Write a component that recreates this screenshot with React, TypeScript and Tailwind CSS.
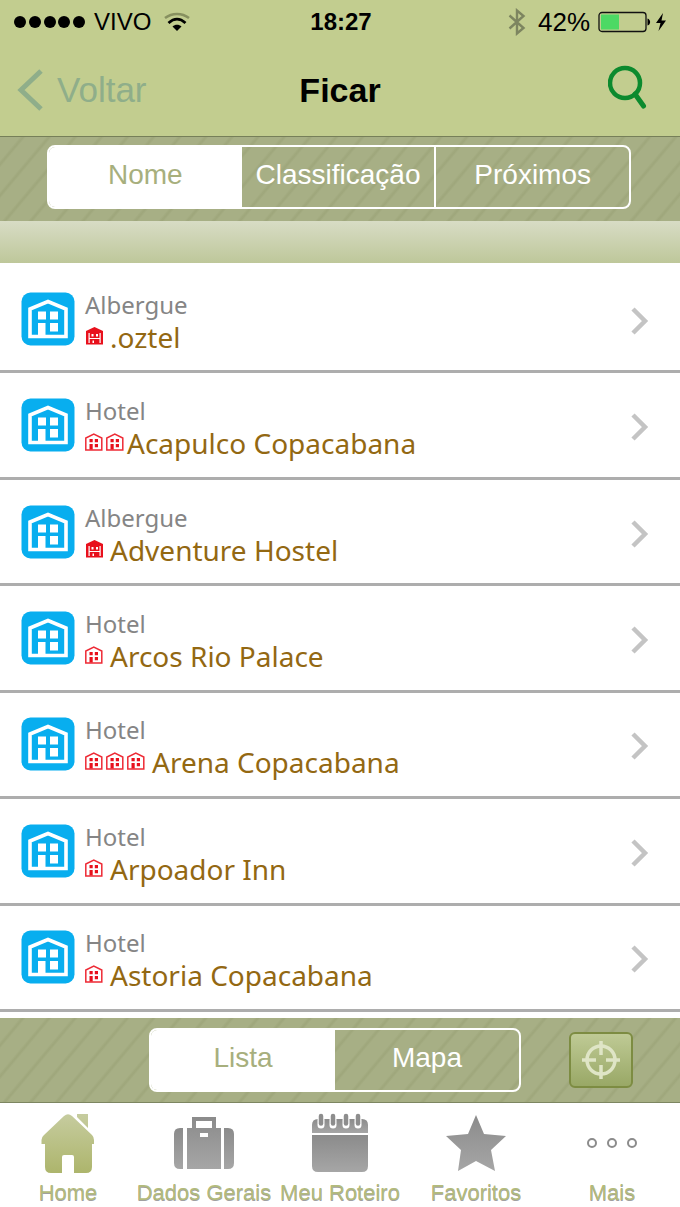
import type { ReactNode } from "react"

interface Place {
  kind: "Albergue" | "Hotel"
  name: string
  rating: number
}

const PLACES: Place[] = [
  { kind: "Albergue", name: ".oztel", rating: 1 },
  { kind: "Hotel", name: "Acapulco Copacabana", rating: 2 },
  { kind: "Albergue", name: "Adventure Hostel", rating: 1 },
  { kind: "Hotel", name: "Arcos Rio Palace", rating: 1 },
  { kind: "Hotel", name: "Arena Copacabana", rating: 3 },
  { kind: "Hotel", name: "Arpoador Inn", rating: 1 },
  { kind: "Hotel", name: "Astoria Copacabana", rating: 1 },
]

const STRIPES =
  "bg-[#a7af85] bg-[repeating-linear-gradient(130deg,transparent_0px,transparent_15px,#a0a87d_17px,#9fa77c_18px,transparent_20px)]"

function StatusBar() {
  return (
    <div className="flex h-11 items-center justify-between pl-3.5 pr-3 text-black">
      <div className="flex flex-1 items-center">
        <svg width="72" height="14" viewBox="0 0 72 14" aria-hidden="true">
          {[6, 21, 36, 50, 65].map((x) => (
            <circle key={x} cx={x} cy="7" r="6" />
          ))}
        </svg>
        <span className="ml-2 text-2xl leading-8">VIVO</span>
        <svg className="ml-3" width="28" height="20" viewBox="0 0 28 20" fill="none" aria-hidden="true">
          <path d="M2 6 C9 0.5 19 0.5 26 6" stroke="#87905f" strokeWidth="2.5" />
          <path d="M5.5 11 C11 6 17 6 22.5 11" stroke="#000" strokeWidth="2.8" />
          <path d="M9.5 14.5 C12 12 16 12 18.5 14.5 L14 19 Z" fill="#000" />
        </svg>
      </div>
      <span className="text-2xl font-bold leading-8">18:27</span>
      <div className="flex flex-1 items-center justify-end">
        <svg width="18" height="28" viewBox="0 0 18 28" fill="none" stroke="#7d8560" strokeWidth="2.4" aria-hidden="true">
          <path d="M1.5 7.5 L15.500 20 L9 25.500 V2.500 L15.500 8 L1.500 20.500" />
        </svg>
        <span className="ml-3 text-[26px] leading-8">42%</span>
        <svg className="ml-2" width="70" height="22" viewBox="0 0 70 22" aria-hidden="true">
          <rect x="1" y="1.5" width="47" height="19" rx="3" fill="none" stroke="#111" strokeWidth="1.3" />
          <rect x="3" y="3.5" width="18" height="15" fill="#4cd964" />
          <path d="M49.5 7.5 C53 8.5 53 13.5 49.5 14.5 Z" />
          <path d="M65 2 L58 12 H62.5 L60.5 20 L68 9.5 H63.5 Z" />
        </svg>
      </div>
    </div>
  )
}

function NavBar() {
  return (
    <header className="grid h-[92px] grid-cols-3 items-center pl-4 pr-8">
      <button className="flex items-center gap-3.5 text-[#8fae8a]">
        <svg width="27" height="42" viewBox="0 0 27 42" fill="none" stroke="currentColor" strokeWidth="5" aria-hidden="true">
          <path d="M25 2 L5 21 L25 40" />
        </svg>
        <span className="text-[35px] leading-10">Voltar</span>
      </button>
      <h1 className="ml-4 text-center text-[34px] font-bold leading-10 text-black">Ficar</h1>
      <button aria-label="Buscar" className="justify-self-end pb-1.5">
        <svg width="40" height="44" viewBox="0 0 40 44" fill="none" stroke="#0c8a2e" aria-hidden="true">
          <circle cx="17" cy="18" r="15" strokeWidth="4.5" />
          <path d="M27 29 L35.500 41" strokeWidth="5" strokeLinecap="round" />
        </svg>
      </button>
    </header>
  )
}

function Segments({ label, items, className }: { label: string; items: string[]; className: string }) {
  return (
    <div
      role="group"
      aria-label={label}
      className={`flex h-16 overflow-hidden rounded-lg border-2 border-white text-[28px] leading-8 ${className}`}
    >
      {items.map((item, i) => (
        <button
          key={item}
          aria-pressed={i === 0}
          className={
            i === 0
              ? "flex-1 basis-0 bg-white pb-1 text-[#a7af7d]"
              : `flex-1 basis-0 pb-1 text-white ${i > 1 ? "border-l-2 border-white" : ""}`
          }
        >
          {item}
        </button>
      ))}
    </div>
  )
}

function HouseBadge() {
  return (
    <svg className="shrink-0" width="54" height="54" viewBox="0 0 54 54" aria-hidden="true">
      <rect x="0.5" y="0.5" width="53" height="53" rx="9" fill="#08aeef" />
      <path d="M9 44.5 V17 L27 9.5 L45 17 V44.5 Z" fill="none" stroke="#fff" strokeWidth="3.6" />
      <path d="M17 19.5 h8 v8 h-8z M29 19.5 h8 v8 h-8z M29 31 h8 v8.500 h-8z M17 31 h7.500 v13 h-7.500z" fill="#fff" />
    </svg>
  )
}

function RatingHouse({ solid }: { solid: boolean }) {
  if (solid) {
    return (
      <svg width="19" height="18" viewBox="0 0 19 18" aria-hidden="true">
        <path d="M1 17.500 V4 L9.500 0 L18 4 V17.500 Z" fill="#e8101c" />
        <path
          d="M3.500 6 h1.200 v10 h-1.200z M14.500 6 h1.200 v10 h-1.200z M6.500 7 h2 v2.500 h-2z M11 7 h2 v2.500 h-2z M4 11 h11 v1 h-11z M7.500 13.500 h1.500 v2.500 h-1.500z"
          fill="#fff"
        />
      </svg>
    )
  }
  return (
    <svg width="19" height="18" viewBox="0 0 19 18" aria-hidden="true">
      <path d="M0.800 17 V5 L8.800 1 L16.800 5 V17 Z" fill="none" stroke="#ee2a35" strokeWidth="1.5" />
      <path d="M4.500 6 h3.200 v3.200 h-3.200z M9.800 6 h3.200 v3.200 h-3.200z M9.800 11 h3.200 v3.200 h-3.200z M4.500 11 h3.200 v5.500 h-3.200z" fill="#e8101c" />
    </svg>
  )
}

function PlaceRow({ place }: { place: Place }) {
  return (
    <li className="border-b-[3px] border-[#adadad]">
      <a href="#" className="flex h-full items-center pl-[21px] pr-[31px]">
        <HouseBadge />
        <span className="ml-2.5 min-w-0 flex-1 pt-1 font-['Noto_Sans',sans-serif]">
          <span className="block text-2xl leading-8 text-[#858585]">{place.kind}</span>
          <span className="flex items-center">
            <span className="flex gap-0.5 pb-0.5" role="img" aria-label={`Nota ${place.rating}`}>
              {Array.from({ length: place.rating }, (_, i) => (
                <RatingHouse key={i} solid={place.kind === "Albergue"} />
              ))}
            </span>
            <span className={`text-[28px] leading-8 text-[#936812] ${place.rating === 2 ? "ml-0.5" : "ml-1.5"}`}>
              {place.name}
            </span>
          </span>
        </span>
        <svg
          className="mt-1"
          width="18"
          height="28"
          viewBox="0 0 18 28"
          fill="none"
          stroke="#c4c4c4"
          strokeWidth="4.5"
          aria-hidden="true"
        >
          <path d="M2 2 L14 14 L2 26" />
        </svg>
      </a>
    </li>
  )
}

function TabItem({ label, active, children }: { label: string; active?: boolean; children: ReactNode }) {
  return (
    <a
      href="#"
      aria-current={active ? "page" : undefined}
      className="flex min-w-0 flex-1 flex-col items-center pt-2 text-[22px] leading-7 whitespace-nowrap text-[#b3bb7c] [text-shadow:0_1px_0_#a0a0a0]"
    >
      <svg width="64" height="64" viewBox="0 0 64 64" fill="url(#tab-gray)" aria-hidden="true">
        {children}
      </svg>
      <span className="mt-1">{label}</span>
    </a>
  )
}

function TabBar() {
  return (
    <nav className="flex h-[104px] bg-white">
      <svg width="0" height="0" className="absolute" aria-hidden="true">
        <defs>
          <linearGradient id="tab-gray" x1="0" y1="0" x2="0" y2="1">
            <stop offset="0" stopColor="#8b8b8b" />
            <stop offset="1" stopColor="#a6a6a6" />
          </linearGradient>
          <linearGradient id="tab-green" x1="0" y1="0" x2="0" y2="1">
            <stop offset="0" stopColor="#c6cc9f" />
            <stop offset="1" stopColor="#adb56c" />
          </linearGradient>
        </defs>
      </svg>
      <TabItem label="Home" active>
        <path
          d="M28 5 Q32 1.500 36 5 L56 24 Q58 26 58 29 V33 H56 V56 Q56 62 50 62 H38 V46 Q38 44 36 44 H28 Q26 44 26 46 V62 H15 Q9 62 9 56 V33 H5.500 V29 Q5.500 26 8 24 Z M41 3 H52 V17 L41 6 Z"
          fill="url(#tab-green)"
        />
      </TabItem>
      <TabItem label="Dados Gerais">
        <path d="M20 17 V6 H44 V17 H49 V58 H15 V17 Z M24 10 V17 H40 V10 Z M28 22 V26 H36 V22 Z" fillRule="evenodd" />
        <path d="M11 17 V58 H8 Q2 58 2 52 V23 Q2 17 8 17 Z M52 17 V58 H56 Q62 58 62 52 V23 Q62 17 56 17 Z" />
      </TabItem>
      <TabItem label="Meu Roteiro">
        <path d="M4 22 V14 Q4 8 10 8 H54 Q60 8 60 14 V22 Z" />
        <path d="M4 24 H60 V55 Q60 61 54 61 H10 Q4 61 4 55 Z" />
        {[13, 25, 38, 50].map((x) => (
          <g key={x} strokeLinecap="round">
            <path d={`M${x} 9 V14`} stroke="#fff" strokeWidth="7" />
            <path d={`M${x} 5 V12.500`} stroke="#8d8d8d" strokeWidth="4.5" />
          </g>
        ))}
      </TabItem>
      <TabItem label="Favoritos">
        <path d="M32 4 L40 23 L62 25 L47 39 L51 60 L32 50 L14 60 L17 39 L2 25 L24 23 Z" />
      </TabItem>
      <TabItem label="Mais">
        <g fill="none" stroke="#8c8c8c" strokeWidth="2">
          <circle cx="12" cy="32" r="4" />
          <circle cx="32" cy="32" r="4" />
          <circle cx="52" cy="32" r="4" />
        </g>
      </TabItem>
    </nav>
  )
}

export default function App() {
  return (
    <div className="flex min-h-screen flex-col bg-white font-['Liberation_Sans',Arial,sans-serif]">
      <div className="bg-[#c2cd8f]">
        <StatusBar />
        <NavBar />
      </div>
      <div className={`border-t border-[#767f59] pt-2 pr-[49px] pb-3 pl-[47px] ${STRIPES}`}>
        <Segments label="Ordenar por" items={["Nome", "Classificação", "Próximos"]} className="w-full" />
      </div>
      <div className="h-[42px] bg-linear-to-b from-[#d8dcc5] to-[#bec79a]" />

      <ul className="grid flex-1 auto-rows-fr pt-1 pb-1.5">
        {PLACES.map((p) => (
          <PlaceRow key={p.name} place={p} />
        ))}
      </ul>

      <div className={`flex items-center justify-end gap-12 border-b border-[#7d8661] py-2.5 pr-[47px] ${STRIPES}`}>
        <Segments label="Modo de exibição" items={["Lista", "Mapa"]} className="w-[372px]" />
        <button
          aria-label="Minha localização"
          className="flex h-14 w-16 shrink-0 items-center justify-center rounded-md border-2 border-[#7d8c42] bg-linear-to-b from-[#bfca95] to-[#99a866]"
        >
          <svg width="40" height="40" viewBox="0 0 40 40" fill="none" stroke="#dfe5c6" strokeWidth="3.5" aria-hidden="true">
            <circle cx="20" cy="20" r="14" />
            <path d="M20 1 V15 M20 25 V39 M1 20 H15 M25 20 H39" />
          </svg>
        </button>
      </div>
      <TabBar />
    </div>
  )
}
